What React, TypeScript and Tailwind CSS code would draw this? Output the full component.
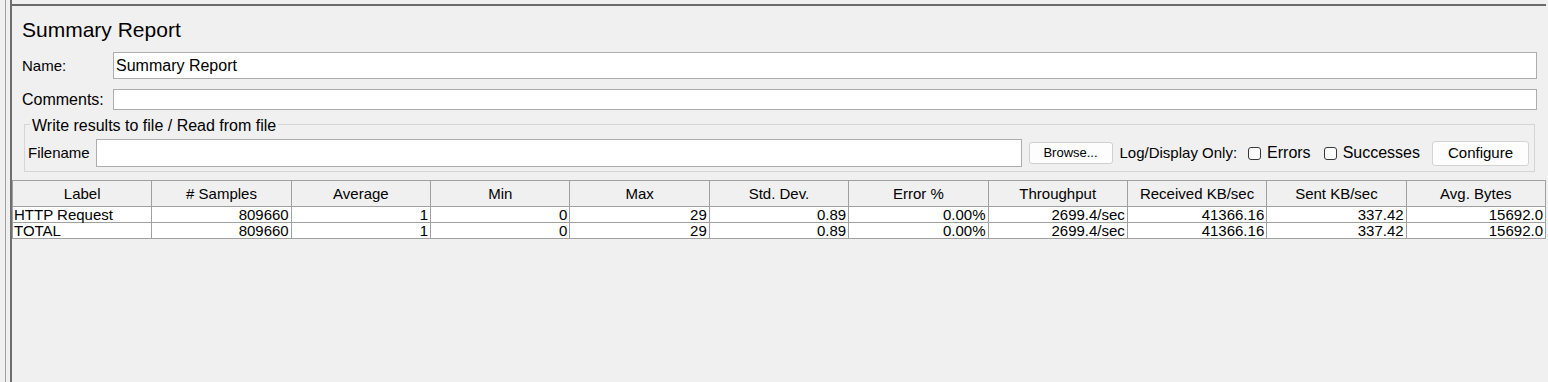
import React from "react";

const columns = [
  "Label",
  "# Samples",
  "Average",
  "Min",
  "Max",
  "Std. Dev.",
  "Error %",
  "Throughput",
  "Received KB/sec",
  "Sent KB/sec",
  "Avg. Bytes",
];

const rows = [
  ["HTTP Request", "809660", "1", "0", "29", "0.89", "0.00%", "2699.4/sec", "41366.16", "337.42", "15692.0"],
  ["TOTAL", "809660", "1", "0", "29", "0.89", "0.00%", "2699.4/sec", "41366.16", "337.42", "15692.0"],
];

function Checkbox({ label }: { label: string }) {
  return (
    <label className="flex items-center gap-[6px] text-[16px] leading-[20px]">
      <span className="h-[13px] w-[13px] rounded-[3px] border border-[#3a3a3a] bg-white" />
      {label}
    </label>
  );
}

export default function App() {
  return (
    <div className="flex h-[382px] w-[1548px] overflow-hidden bg-[#f0f0f0] font-['Liberation_Sans',Arial,sans-serif] text-black">
      <div className="w-[5px]" />
      <div className="w-px bg-[#a0a0a0]" />
      <div className="w-[4px]" />
      <div className="flex-1 border-l-2 border-[#6e6e6e]">
        <div className="mr-[2px] mt-[4px] border-t-2 border-[#6b6b6b]">
          <div className="pl-[10px] pr-[9px]">
            <h1 className="pt-[12px] text-[21px] leading-[24px]">Summary Report</h1>

            <div className="mt-[10px] flex items-center">
              <span className="w-[91px] text-[15px] leading-[20px]">Name:</span>
              <div className="flex h-[27px] flex-1 items-center border border-[#adadad] bg-white pl-[2px] text-[16px]">
                Summary Report
              </div>
            </div>

            <div className="mt-[10px] flex items-center">
              <span className="w-[91px] text-[16px] leading-[20px]">Comments:</span>
              <div className="h-[21px] flex-1 border border-[#adadad] bg-white" />
            </div>

            <fieldset className="mx-[2px] mt-[3px] border border-[#d5d5d5] pb-[4px] pl-[3px] pr-[5px]">
              <legend className="ml-[2px] px-[2px] pt-[4px] text-[16px] leading-[18px]">
                Write results to file / Read from file
              </legend>
              <div className="mt-[4px] flex h-[28px] items-center">
                <span className="w-[68px] text-[15px] leading-[20px]">Filename</span>
                <div className="h-[28px] flex-1 border border-[#adadad] bg-white" />
                <button className="ml-[7px] h-[22px] w-[84px] rounded-[3px] border border-[#cfcfcf] bg-[#fdfdfd] text-[13px]">
                  Browse...
                </button>
                <span className="ml-[7px] text-[15px] leading-[20px]">Log/Display Only:</span>
                <div className="ml-[11px] flex items-center gap-[13px]">
                  <Checkbox label="Errors" />
                  <Checkbox label="Successes" />
                </div>
                <button className="ml-[12px] h-[25px] w-[97px] rounded-[3px] border border-[#d3d3d3] bg-[#fdfdfd] text-[15px]">
                  Configure
                </button>
              </div>
            </fieldset>
          </div>

          <table className="mt-[8px] w-full table-fixed border-collapse text-[15px]">
            <thead>
              <tr>
                {columns.map((c) => (
                  <th
                    key={c}
                    className="h-[26px] border border-[#a0a0a0] bg-[#f0f0f0] p-0 text-center font-normal leading-[24px]"
                  >
                    {c}
                  </th>
                ))}
              </tr>
            </thead>
            <tbody>
              {rows.map((r) => (
                <tr key={r[0]} className="bg-white">
                  {r.map((v, i) => (
                    <td
                      key={i}
                      className={`h-[16px] border border-[#a0a0a0] py-0 leading-[15px] ${
                        i === 0 ? "pl-px text-left" : "pr-[2px] text-right"
                      }`}
                    >
                      {v}
                    </td>
                  ))}
                </tr>
              ))}
            </tbody>
          </table>
        </div>
      </div>
    </div>
  );
}
